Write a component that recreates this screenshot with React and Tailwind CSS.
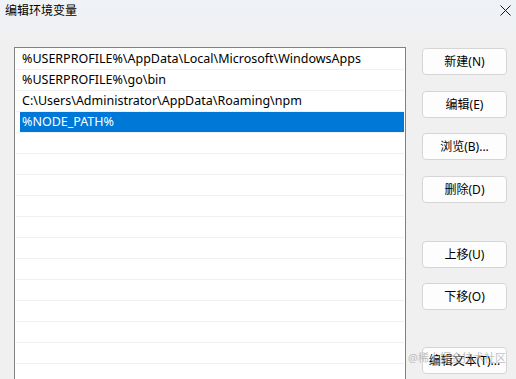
import React from 'react';

const paths = [
  '%USERPROFILE%\\AppData\\Local\\Microsoft\\WindowsApps',
  '%USERPROFILE%\\go\\bin',
  'C:\\Users\\Administrator\\AppData\\Roaming\\npm',
  '%NODE_PATH%',
];

const buttons = [
  { label: '新建(N)', mt: 'mt-[48px]' },
  { label: '编辑(E)', mt: 'mt-[16px]' },
  { label: '浏览(B)...', mt: 'mt-[15px]' },
  { label: '删除(D)', mt: 'mt-[16px]' },
  { label: '上移(U)', mt: 'mt-[38px]' },
  { label: '下移(O)', mt: 'mt-[15px]' },
  { label: '编辑文本(T)...', mt: 'mt-[37px]' },
];

const App = () => {
  const rows = [...paths, ...Array(14).fill('')];
  const selected = 3;

  return (
    <div
      className="relative w-[516px] h-[379px] overflow-hidden bg-[#f0f0f0] text-[12px] text-black"
      style={{ fontFamily: '"Noto Sans", "Noto Sans CJK SC", sans-serif' }}
    >
      {/* title bar */}
      <div className="absolute top-0 left-0 w-full h-[40px] bg-gradient-to-b from-[#eef3f8] to-[#f0f0f0]" />
      <div className="relative flex items-center justify-between h-[21px] pl-[5px] pr-[5px]">
        <span className="text-[12px] leading-none">编辑环境变量</span>
        <svg width="11" height="11" viewBox="0 0 11 11">
          <path d="M0.5 0.5 L10.5 10.5 M10.5 0.5 L0.5 10.5" stroke="#1a1a1a" strokeWidth="1" />
        </svg>
      </div>

      <div className="relative flex">
        {/* list box */}
        <div className="ml-[14px] mt-[26px] w-[392px] h-[360px] border border-[#828282] bg-white p-px">
          {rows.map((text, i) => (
            <div key={i} className="h-[21px] border-b border-[#f0f0f0] pl-[4px]">
              <div
                className={
                  i === selected
                    ? 'h-[20px] bg-[#0078d7] text-white pl-[2px] pt-px flex items-center whitespace-nowrap text-[12.5px]'
                    : 'h-[20px] pl-[2px] pt-px flex items-center whitespace-nowrap text-[12.5px]'
                }
              >
                {text}
              </div>
            </div>
          ))}
        </div>

        {/* buttons */}
        <div className="flex flex-col ml-[16px] -mt-[21px]">
          {buttons.map((b) => (
            <button
              key={b.label}
              className={`${b.mt} w-[85px] h-[27px] rounded-[4px] border border-[#d5d5d5] bg-[#fdfdfd] text-[12px] text-black flex items-center justify-center`}
            >
              {b.label}
            </button>
          ))}
        </div>
      </div>

      {/* watermark */}
      <div className="absolute left-[408px] top-[350px] text-[11px] text-[#a8a8a8] opacity-70 whitespace-nowrap pointer-events-none">
        @稀土掘金技术社区
      </div>
    </div>
  );
};

export default App;
